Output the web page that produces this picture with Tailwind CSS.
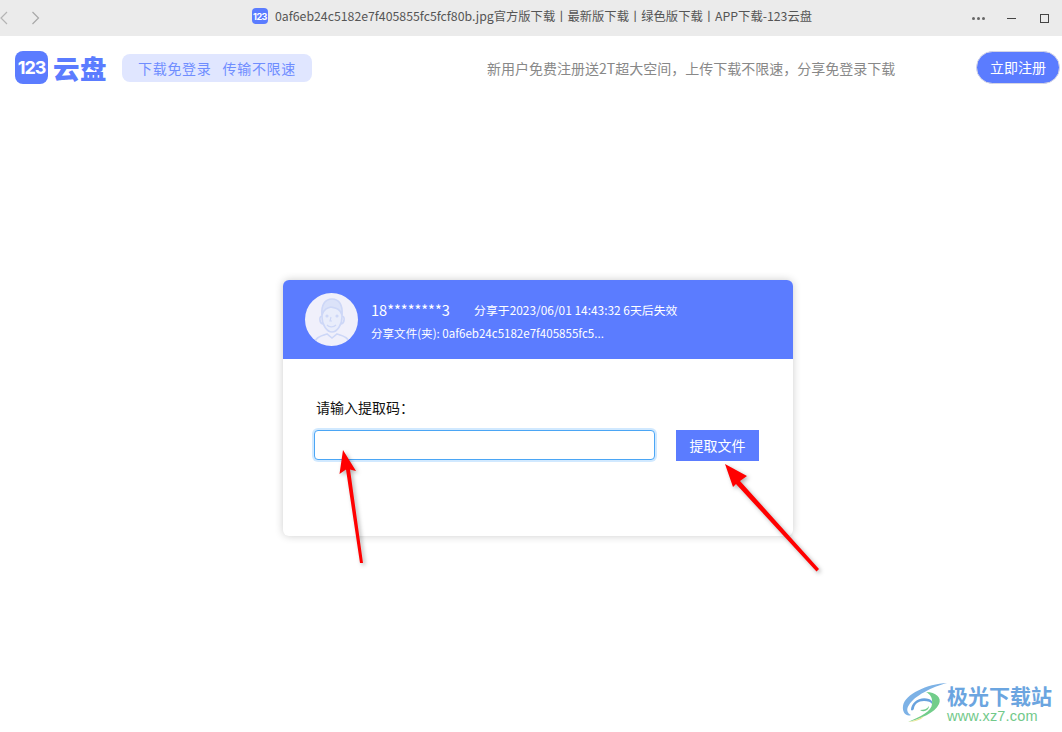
<!DOCTYPE html>
<html lang="zh">
<head>
<meta charset="utf-8">
<script src="https://cdn.jsdelivr.net/npm/@tailwindcss/browser@4"></script>
<title>123云盘</title>
</head>
<body class="relative h-[732px] w-[1062px] overflow-hidden bg-white font-['Noto_Sans_CJK_SC','Noto_Sans',sans-serif]">
  <div class="relative flex h-9 items-center bg-[#ebebeb]">
    <div class="flex items-center gap-[21px]">
      <svg width="8" height="14" viewBox="0 0 8 14" fill="none" stroke="#b4b4b4" stroke-width="1.2"><path d="M7 1 1 7l6 6"/></svg>
      <svg class="ml-[2px]" width="9" height="14" viewBox="0 0 9 14" fill="none" stroke="#a8a8a8" stroke-width="1.2"><path d="M1.5 1l6 6-6 6"/></svg>
    </div>
    <div class="absolute left-[252px] top-[8px] flex items-center gap-[7px]">
      <div class="flex h-4 w-4 items-center justify-center rounded-[4px] bg-[#5b7cff] font-['Inter',sans-serif] text-[9px] leading-none font-bold tracking-[-0.5px] text-white">123</div>
      <span class="whitespace-nowrap text-[12.3px] leading-4 text-[#555]">0af6eb24c5182e7f405855fc5fcf80b.jpg官方版下载丨最新版下载丨绿色版下载丨APP下载-123云盘</span>
    </div>
    <div class="ml-auto flex items-center pr-[13px]">
      <div class="flex gap-[2px]"><i class="size-[3px] rounded-full bg-[#666]"></i><i class="size-[3px] rounded-full bg-[#666]"></i><i class="size-[3px] rounded-full bg-[#666]"></i></div>
      <div class="ml-[22px] h-px w-[9px] bg-[#444]"></div>
      <div class="ml-[24px] size-[9px] border border-[#444]"></div>
    </div>
  </div>

  <header class="flex h-[64px] items-start">
    <div class="ml-[15px] mt-[15px] flex h-[33px] w-[33px] items-center justify-center rounded-[8px] bg-[#5b7cff] font-['Inter',sans-serif] text-[18px] leading-none font-bold tracking-[-1px] text-white">123</div>
    <div class="ml-[5px] mt-[15px] w-[54px] text-[26.5px] leading-[33px] font-black tracking-[0.5px] whitespace-nowrap text-[#5b7cff]">云盘</div>
    <div class="ml-[15px] mt-[18px] flex h-[28px] w-[190px] items-center justify-center gap-[11px] rounded-[8px] bg-[#e0e6ff] text-[14px] tracking-[0.7px] text-[#6f8dff]">
      <span>下载免登录</span><span>传输不限速</span>
    </div>
    <p class="ml-[175px] mt-[21px] w-[420px] whitespace-nowrap text-[14px] leading-[22px] text-[#888]">新用户免费注册送2T超大空间，上传下载不限速，分享免登录下载</p>
    <button class="ml-[69px] mt-[15px] h-[33px] w-[84px] rounded-[17px] border border-[#d5d5e5] bg-[#5b7cff] text-[14px] text-white">立即注册</button>
  </header>

  <main class="ml-[283px] mt-[180px] h-[256px] w-[510px] overflow-hidden rounded-[6px] bg-white shadow-[0_0_8px_rgba(0,0,0,0.2)]">
    <div class="flex h-[79px] items-center bg-[#5b7cff] pl-[22px] text-white">
      <div class="flex size-[53px] items-end justify-center overflow-hidden rounded-full bg-[#f0f0fb]">
        <svg width="44" height="50" viewBox="0 0 44 50" fill="none" stroke="#cdd7f7" stroke-width="1.6">
          <path d="M12 21c0-10 4-15 10-15s10 5 10 15c0 8-5 15-10 15S12 29 12 21Z" fill="#e9edfb"/>
          <path d="M12 19c2-6 5-7 9-8 4 1 9 1 11 8 1-10-3-16-10-16S11 9 12 19Z" fill="#dbe2f9"/>
          <path d="M12 20c-3 0-3 7 1 8M32 20c3 0 3 7-1 8M4 50c0-8 6-10 13-12l5 4 5-4c7 2 13 4 13 12"/>
          <path d="M17 29c2 2 6 3 9 0M21 21l-1 4h2" stroke-width="1.2"/>
          <circle cx="17" cy="20" r="0.8" fill="#cdd7f7"/><circle cx="27" cy="20" r="0.8" fill="#cdd7f7"/>
        </svg>
      </div>
      <div class="ml-[13px]">
        <div class="flex items-center">
          <span class="w-[103px] text-[14.6px] leading-[22px]">18********3</span>
          <span class="text-[11.9px] leading-[22px]">分享于2023/06/01 14:43:32 6天后失效</span>
        </div>
        <div class="mt-[4px] text-[11.55px] leading-4">分享文件(夹): 0af6eb24c5182e7f405855fc5...</div>
      </div>
    </div>
    <div class="px-[31px] pt-[38px]">
      <div class="pl-[2px] text-[14px] leading-5 text-[#111]">请输入提取码：</div>
      <div class="mt-[13px] flex items-start">
        <input type="text" aria-label="提取码" class="h-[30px] w-[341px] rounded-[4px] border border-[#4ba6f5] bg-white shadow-[0_0_0_2px_rgba(24,144,255,0.2)] outline-none">
        <button class="ml-[21px] h-[31px] w-[83px] bg-[#5b7cff] text-[14px] text-white">提取文件</button>
      </div>
    </div>
  </main>

  <svg class="pointer-events-none absolute left-0 top-0 drop-shadow-[2px_2px_2px_rgba(0,0,0,0.3)]" width="1062" height="732" viewBox="0 0 1062 732" fill="#f00">
    <polygon points="343,450 356,471 350,469.5 363,563 360,563 346,469.5 339.5,474"/>
    <polygon points="725,464 747,476 740,481 819,569 816.5,571.5 736,484 733,487"/>
  </svg>

  <div class="absolute left-[902px] top-[680px] flex items-center">
    <svg width="46" height="44" viewBox="0 0 46 44">
      <path d="M45 3C25 4 3 14 1 26c-1 7 4 11 8 9-4-2-5-6-2-10C12 16 30 7 45 3Z" fill="#7db2e6"/>
      <path d="M9 30c0-8 9-14 18-11 3 1 4 3 3 5-1-2-4-3-8-3-6 0-9 3-10 7 0 2-2 3-3 2Z" fill="#68a2de"/>
      <path d="M24 12c10 0 16 6 13 12-4 9-19 15-31 18 12-5 24-11 24-18 1-6-2-10-6-12Z" fill="#72cd8a"/>
      <path d="M6 42c6-1 11-3 16-6l-3 3c-4 2-9 3-13 3Z" fill="#e8e58f"/>
      <path d="M18 30c4 0 7-1 9-4 0 4-5 7-9 4Z" fill="#72cd8a"/>
    </svg>
    <div class="-ml-[1px] mt-[2px]">
      <div class="whitespace-nowrap text-[21px] leading-[26px] font-bold text-[#6ba5e0]">极光下载站</div>
      <div class="whitespace-nowrap font-['Liberation_Sans',sans-serif] text-[14.5px] leading-[16px] tracking-[0.2px] text-[#72c98a]">www.xz7.com</div>
    </div>
  </div>
</body>
</html>
